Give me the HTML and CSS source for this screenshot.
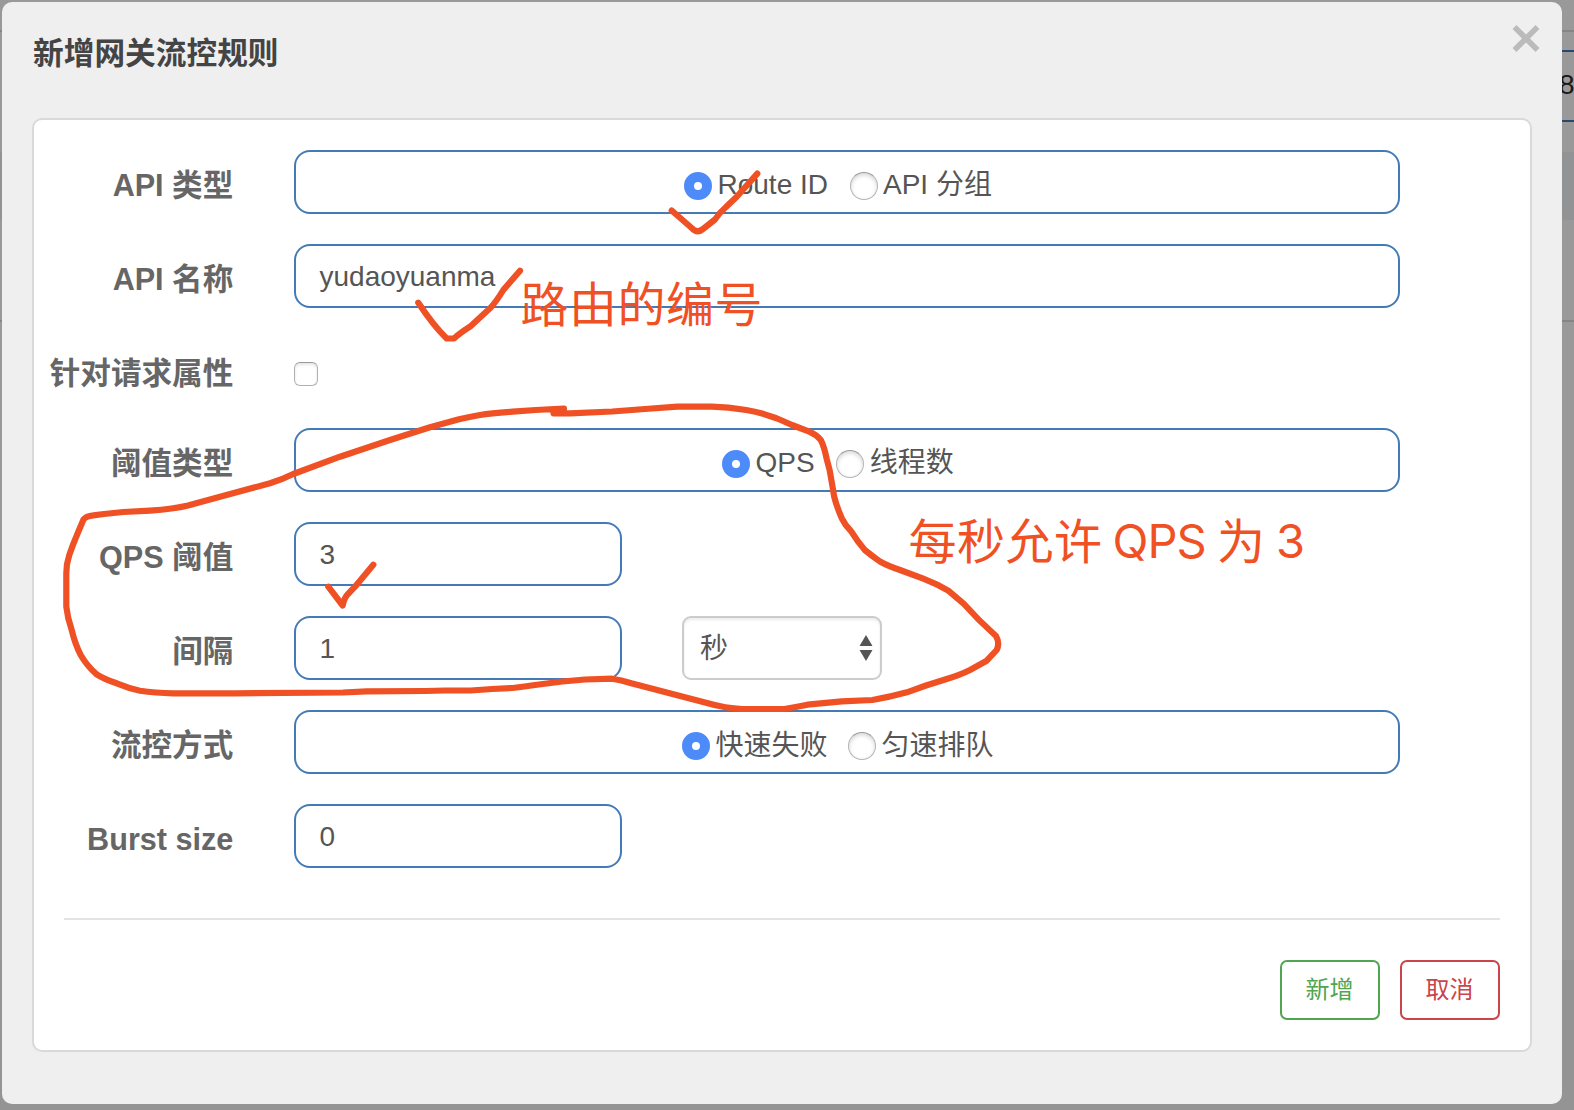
FILE: index.html
```html
<!DOCTYPE html>
<html lang="zh-CN">
<head>
<meta charset="utf-8">
<title>新增网关流控规则</title>
<link rel="stylesheet" href="styles.css">
</head>
<body>
<div class="page">
  <div class="page-line page-line-top"></div>
  <div class="page-input">8</div>
  <div class="page-band"></div>
  <div class="page-line page-line-mid"></div>
  <div class="page-foot"></div>
</div>

<div class="modal">
  <header class="modal-header">
    <h1 class="modal-title">新增网关流控规则</h1>
    <svg class="close" viewBox="0 0 30 30"><path d="M3.500 4L26.500 27M26.500 4L3.500 27"/></svg>
  </header>
  <section class="panel">
    <form class="form">
      <div class="row">
        <span class="label">API 类型</span>
        <div class="field radios radios-api"><i class="radio on"></i><span class="option">Route ID</span><i class="radio"></i><span class="option">API 分组</span></div>
      </div>
      <div class="row">
        <span class="label">API 名称</span>
        <div class="field">yudaoyuanma</div>
      </div>
      <div class="row row-check">
        <span class="label">针对请求属性</span>
        <i class="checkbox"></i>
      </div>
      <div class="row">
        <span class="label">阈值类型</span>
        <div class="field radios radios-grade"><i class="radio on"></i><span class="option">QPS</span><i class="radio"></i><span class="option">线程数</span></div>
      </div>
      <div class="row">
        <span class="label">QPS 阈值</span>
        <div class="field short">3</div>
      </div>
      <div class="row">
        <span class="label">间隔</span>
        <div class="field short">1</div>
        <div class="select"><span>秒</span><svg class="arrows" viewBox="0 0 14 28"><path d="M7 1L13.500 12H0.500ZM7 27L0.500 16H13.500Z"/></svg></div>
      </div>
      <div class="row">
        <span class="label">流控方式</span>
        <div class="field radios radios-control"><i class="radio on"></i><span class="option">快速失败</span><i class="radio"></i><span class="option">匀速排队</span></div>
      </div>
      <div class="row">
        <span class="label">Burst size</span>
        <div class="field short">0</div>
      </div>
    </form>
    <footer class="actions">
      <div class="btn btn-add">新增</div>
      <div class="btn btn-cancel">取消</div>
    </footer>
  </section>
</div>

<svg class="notes" viewBox="0 0 1574 1110">
  <g class="pen">
    <path d="M671.700 210.500L691.700 228Q697 234 703 229L715 219.500Q719 213 726 207L736.700 196.700L757.300 173.600"/>
    <path d="M418.300 302.700Q433 325 446.700 338.500H454Q460 333 470 326.700L490 308.300Q496 302 503.300 290L520 270.700"/>
    <path d="M328.300 586.700L342.700 605.500Q344 598 348 594L355 586.700L373.300 564.700"/>
    <path d="M564 408.500L535.700 410L512.700 411.700Q491 413 480 415Q469 417 459 419.300L430 427.300L390 440L340 456.700L293.300 474Q281 480 270 483.300L220 496.700L188 505.500Q174 509 150 510.700L123.300 512L104 514L93.300 515.300Q86 516 83.500 519.500L78.300 531.700Q73 544 69.300 555Q66.300 564 66.300 573.300V606.700Q67.500 618 71.700 630Q75 644 80.700 655Q87 666 96.700 674.300Q104 679 116.700 683.300Q128 688 140 690.700Q155 693 173.300 693.300H235L343 692.500L366.700 691.300L425 691L445 690.500H470.600L492 689L512.700 688Q525 686.500 535 685L562.500 681.500L585 679.500L612.200 678.700Q621 680 631.300 683.300L677.300 695.300L707 703Q726 708.500 742.300 709H784.400Q796 707 807.400 704.700L841.800 701.300L872.400 700Q890 697 906.900 692.300L926 685.500L946.700 679Q960 675 970 670L986.700 660.700L996.700 650Q1000 643 996 636Q978 620 963.300 603.300L948.300 590.700Q937 584 923.300 578.700L900 570Q888 566 880 561.500Q872 556 864.800 550Q857 541 851.400 531.700Q845 525 841.800 518.300Q836.500 506 834.200 496.700Q832 483 829.600 470L826.700 459Q824 446 820.800 440Q816 434.500 809.300 431.700L792 425Q770 414 746.200 410Q728 407 711.700 406.700H677.300L645 409L612.200 411.500L570 413.300H553.500L555 410.500"/>
  </g>
  <g class="note-text">
    <text x="520.500" y="322" class="note-han">路由的编号</text>
    <text x="908.500" y="558.500" class="note-han">每秒允许</text>
    <text x="1112.500" y="558" class="note-latin">QPS</text>
    <text x="1217" y="558.500" class="note-han">为</text>
    <text x="1276" y="558" class="note-latin">3</text>
  </g>
</svg>
</body>
</html>
```
FILE: styles.css
```css
* { box-sizing: border-box; }

body {
  margin: 0;
  width: 1574px;
  height: 1110px;
  overflow: hidden;
  position: relative;
  font-family: "Liberation Sans", "Noto Sans CJK SC", sans-serif;
  color: #555;
}

.page {
  height: 1110px;
  display: flex;
  flex-direction: column;
  background: #999;
}
.page-line { height: 2px; background: #858585; }
.page-line-top { margin-top: 30px; }
.page-line-mid { margin-top: 100px; }
.page-input {
  height: 72px;
  margin: 18px -20px 0 1200px;
  padding-left: 357px;
  border: 2px solid #264a6e;
  font-size: 28px;
  line-height: 66px;
  color: #1a1a1a;
}
.page-band { height: 68px; margin-top: 30px; background: #929394; }
.page-foot { flex: 1; margin-top: 638px; background: #949494; }

.modal {
  position: absolute;
  left: 2px;
  top: 2px;
  width: 1560px;
  height: 1102px;
  padding: 0 30px;
  border-radius: 10px;
  background: #efefef;
}
.modal-header {
  height: 116px;
  display: flex;
  justify-content: space-between;
  padding-top: 21px;
}
.modal-title {
  margin: 9px 0 0 1px;
  font-size: 30.7px;
  line-height: 44px;
  font-weight: bold;
  color: #444;
}
.close { width: 30px; height: 30px; margin-right: -9px; }
.close path { fill: none; stroke: #bbb; stroke-width: 5.5; }

.panel {
  width: 1500px;
  height: 934px;
  padding: 30px;
  border: 2px solid #d9d9d9;
  border-radius: 10px;
  background: #fff;
}
.form {
  display: flex;
  flex-direction: column;
  gap: 30px;
  height: 770px;
  border-bottom: 2px solid #e3e3e3;
}
.row { display: flex; height: 64px; }
.row-check { height: 60px; align-items: center; }
.label {
  width: 190px;
  margin: 0 60px 0 -20px;
  display: flex;
  justify-content: flex-end;
  white-space: pre;
  padding: 3px 0.7px 0 0;
  font-size: 30.6px;
  line-height: 64px;
  font-weight: bold;
  color: #666;
}
.row-check .label { padding-top: 10px; }

.field {
  width: 1106px;
  height: 64px;
  padding: 1px 0 0 23.5px;
  border: 2px solid #447bb7;
  border-radius: 16px;
  font-size: 28px;
  line-height: 60px;
}
.short { width: 328px; }
.radios { display: flex; align-items: center; padding-top: 4px; }
.radios-api { padding-left: 388px; }
.radios-grade { padding-left: 426px; }
.radios-control { padding-left: 386px; }
.radio {
  width: 28px;
  height: 28px;
  margin: 4px 5.5px 0 0;
  border-radius: 50%;
  border: 1.5px solid #b4b4b4;
  border-top-color: #999;
  background: #fff;
  box-shadow: inset 0 2px 4px rgba(0, 0, 0, 0.16);
}
.radio.on {
  border: 10px solid #4c8bf8;
  box-shadow: 0 0 0 0 transparent;
}
.option { margin: 2px 21.5px 0 0; line-height: 56px; }
.radios-control .option { margin: 3px 20.5px 0 0; }

.checkbox {
  width: 24px;
  height: 24px;
  margin-top: 12px;
  border: 1.5px solid #b0b0b0;
  border-top-color: #999;
  border-radius: 6px;
  box-shadow: inset 0 2px 3px rgba(0, 0, 0, 0.1);
}

.select {
  width: 200px;
  height: 64px;
  margin-left: 60px;
  padding: 0 7px 0 16px;
  display: flex;
  justify-content: space-between;
  align-items: center;
  border: 2px solid #ccc;
  border-radius: 9px;
  box-shadow: inset 0 2px 3px rgba(0, 0, 0, 0.08);
  font-size: 28px;
}
.select span { margin-bottom: 4px; }
.arrows { width: 14px; height: 28px; fill: #555; }

.actions {
  display: flex;
  justify-content: flex-end;
  gap: 20px;
  padding-top: 40px;
}
.btn {
  width: 100px;
  height: 60px;
  border: 2px solid;
  border-radius: 7px;
  text-align: center;
  font-size: 24px;
  line-height: 56px;
  text-indent: -1px;
}
.btn-add { color: #50a550; }
.btn-cancel { color: #cb444a; }

.notes { position: absolute; left: 0; top: 0; width: 1574px; height: 1110px; }
.pen {
  fill: none;
  stroke: #ef5124;
  stroke-width: 6.2;
  stroke-linecap: round;
  stroke-linejoin: round;
}
.note-text { fill: #ef5124; font-size: 48px; }
.note-han { font-family: "Noto Sans CJK SC", sans-serif; letter-spacing: 0.5px; }
.note-latin { font-family: Inter, sans-serif; font-size: 47px; letter-spacing: -1px; }
```
